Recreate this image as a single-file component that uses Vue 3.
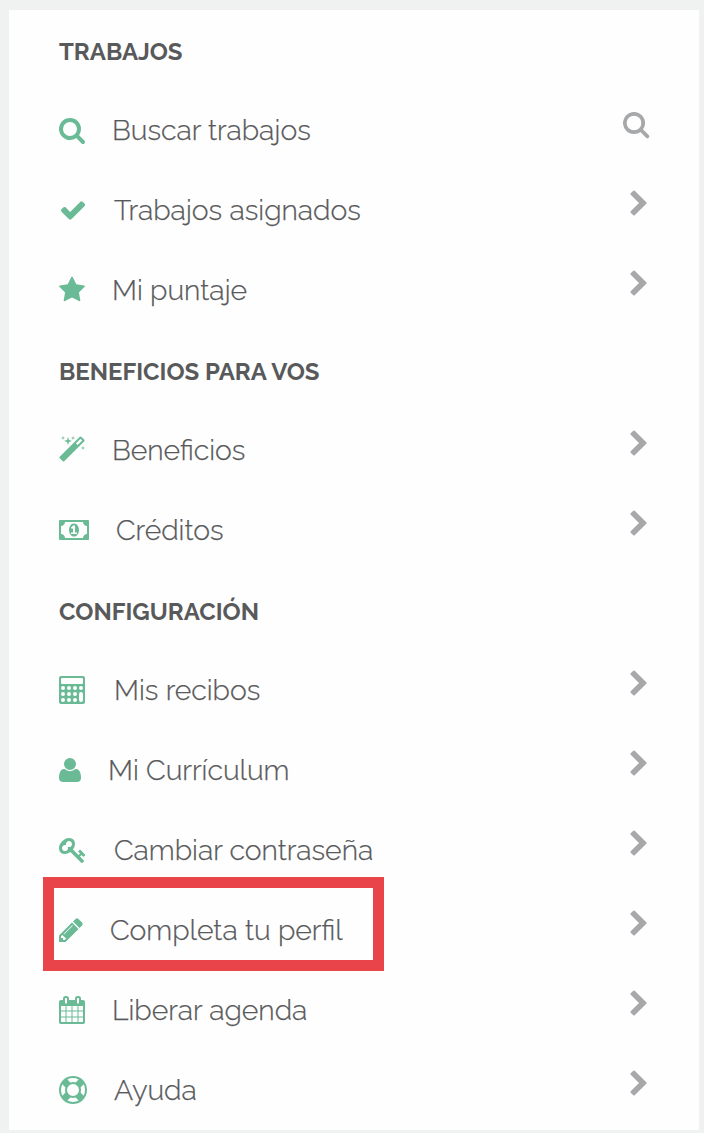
<template>
  <main class="page">
    <div class="panel">
      <section v-for="s in sections" :key="s.title">
        <h2 class="title">{{ s.title }}</h2>
        <ul class="list">
          <li
            v-for="item in s.items"
            :key="item.label"
            class="item"
            :class="{ highlighted: item.highlighted }"
          >
            <svg class="icon" :style="{ width: icons[item.icon].width + 'px' }" :viewBox="icons[item.icon].box">
              <path fill-rule="evenodd" :d="icons[item.icon].path" />
            </svg>
            <a class="label">{{ item.label }}</a>
            <svg v-if="item.icon === 'search'" class="action search" viewBox="0 0 28 28">
              <circle cx="11" cy="11" r="9.2" />
              <path d="M18 18L24.4 24.4" />
            </svg>
            <svg v-else class="action chevron" viewBox="0 0 1792 1792">
              <path :d="chevron" />
            </svg>
          </li>
        </ul>
      </section>
    </div>
  </main>
</template>

<script setup>
const chevron = 'M1363 877l-742 742q-19 19-45 19t-45-19l-166-166q-19-19-19-45t19-45l531-531-531-531q-19-19-19-45t19-45l166-166q19-19 45-19t45 19l742 742q19 19 19 45t-19 45z';

const sections = [
  {
    title: 'TRABAJOS',
    items: [
      { label: 'Buscar trabajos', icon: 'search' },
      { label: 'Trabajos asignados', icon: 'check' },
      { label: 'Mi puntaje', icon: 'star' },
    ],
  },
  {
    title: 'BENEFICIOS PARA VOS',
    items: [
      { label: 'Beneficios', icon: 'magic' },
      { label: 'Créditos', icon: 'money' },
    ],
  },
  {
    title: 'CONFIGURACIÓN',
    items: [
      { label: 'Mis recibos', icon: 'calculator' },
      { label: 'Mi Currículum', icon: 'user' },
      { label: 'Cambiar contraseña', icon: 'key' },
      { label: 'Completa tu perfil', icon: 'pencil', highlighted: true },
      { label: 'Liberar agenda', icon: 'calendar' },
      { label: 'Ayuda', icon: 'ring' },
    ],
  },
];

const icons = {
  search: {
    width: 26,
    box: '64 0 1664 1792',
    path: 'M1216 832q0-185-131.5-316.5t-316.5-131.5-316.5 131.5-131.5 316.5 131.5 316.5 316.5 131.5 316.5-131.5 131.5-316.5zm512 832q0 52-38 90t-90 38q-54 0-90-38l-343-342q-179 124-399 124-143 0-273.5-55.5t-225-150-150-225-55.5-273.5 55.5-273.5 150-225 225-150 273.5-55.5 273.5 55.5 225 150 150 225 55.5 273.5q0 220-124 399l343 343q37 37 37 90z',
  },
  check: {
    width: 28,
    box: '0 0 1792 1792',
    path: 'M1671 566q0 40-28 68l-724 724-136 136q-28 28-68 28t-68-28l-136-136-362-362q-28-28-28-68t28-68l136-136q28-28 68-28t68 28l294 295 656-657q28-28 68-28t68 28l136 136q28 28 28 68z',
  },
  star: {
    width: 26,
    box: '64 0 1664 1792',
    path: 'M1728 647q0 22-26 48l-363 354 86 500q1 7 1 20 0 21-10.5 35.5t-30.5 14.5q-19 0-40-12l-449-236-449 236q-22 12-40 12-21 0-31.5-14.5t-10.5-35.5q0-6 2-20l86-500-364-354q-25-27-25-48 0-37 56-46l502-73 225-455q19-41 49-41t49 41l225 455 502 73q56 9 56 46z',
  },
  magic: {
    width: 26,
    box: '64 0 1664 1792',
    path: 'M1254 581l293-293-107-107-293 293zm447-293q0 27-18 45l-1286 1286q-18 18-45 18t-45-18l-198-198q-18-18-18-45t18-45l1286-1286q18-18 45-18t45 18l198 198q18 18 18 45zm-1351-190l98 30-98 30-30 98-30-98-98-30 98-30 30-98zm350 162l196 60-196 60-60 196-60-196-196-60 196-60 60-196zm930 478l98 30-98 30-30 98-30-98-98-30 98-30 30-98zm-640-640l98 30-98 30-30 98-30-98-98-30 98-30 30-98z',
  },
  money: {
    width: 30,
    box: '0 0 1920 1792',
    path: 'M768 1152h384v-96h-128v-448h-114l-148 137 77 80q42-37 55-57h2v288h-128v96zm512-256q0 70-21 142t-59.5 134-101.5 101-138 39-138-39-101.5-101-59.5-134-21-142 21-142 59.5-134 101.5-101 138-39 138 39 101.5 101 59.5 134 21 142zm512 256v-512q-106 0-181-75t-75-181h-1152q0 106-75 181t-181 75v512q106 0 181 75t75 181h1152q0-106 75-181t181-75zm128-832v1152q0 26-19 45t-45 19h-1792q-26 0-45-19t-19-45v-1152q0-26 19-45t45-19h1792q26 0 45 19t19 45z',
  },
  calculator: {
    width: 28,
    box: '0 0 28 28',
    path: 'M2 0h22a2 2 0 0 1 2 2v24a2 2 0 0 1-2 2h-22a2 2 0 0 1-2-2v-24a2 2 0 0 1 2-2zM3 2a1 1 0 0 0-1 1v4a1 1 0 0 0 1 1h20a1 1 0 0 0 1-1v-4a1 1 0 0 0-1-1zM2 12a2 2 0 1 0 4 0a2 2 0 1 0-4 0zM8 12a2 2 0 1 0 4 0a2 2 0 1 0-4 0zM14 12a2 2 0 1 0 4 0a2 2 0 1 0-4 0zM20 12a2 2 0 1 0 4 0a2 2 0 1 0-4 0zM2 18a2 2 0 1 0 4 0a2 2 0 1 0-4 0zM8 18a2 2 0 1 0 4 0a2 2 0 1 0-4 0zM14 18a2 2 0 1 0 4 0a2 2 0 1 0-4 0zM2 24a2 2 0 1 0 4 0a2 2 0 1 0-4 0zM8 24a2 2 0 1 0 4 0a2 2 0 1 0-4 0zM14 24a2 2 0 1 0 4 0a2 2 0 1 0-4 0zM20 18v6a2 2 0 0 0 4 0v-6a2 2 0 0 0-4 0z',
  },
  user: {
    width: 22,
    box: '192 0 1408 1792',
    path: 'M1600 1405q0 120-73 189.5t-194 69.5h-874q-121 0-194-69.5t-73-189.5q0-53 3.5-103.5t14-109 26.5-108.5 43-97.5 62-81 85.5-53.5 111.5-20q9 0 42 21.5t74.5 48 108 48 133.5 21.5 133.5-21.5 108-48 74.5-48 42-21.5q61 0 111.5 20t85.5 53.5 62 81 43 97.5 26.5 108.5 14 109 3.5 103.5zm-320-893q0 159-112.5 271.5t-271.5 112.5-271.5-112.5-112.5-271.5 112.5-271.5 271.5-112.5 271.5 112.5 112.5 271.5z',
  },
  key: {
    width: 28,
    box: '0 0 1792 1792',
    path: 'M832 512q0-80-56-136t-136-56-136 56-56 136q0 42 19 83-41-19-83-19-80 0-136 56t-56 136 56 136 136 56 136-56 56-136q0-42-19-83 41 19 83 19 80 0 136-56t56-136zm851 704q0 17-49 66t-66 49q-9 0-28.5-16t-36.5-33-38.5-40-24.5-26l-96 96 220 220q28 28 28 68 0 42-39 81t-81 39q-40 0-68-28l-671-671q-176 131-365 131-163 0-265.5-102.5t-102.5-265.5q0-160 95-313t248-248 313-95q163 0 265.5 102.5t102.5 265.5q0 189-131 365l355 355 96-96q-3-3-26-24.5t-40-38.5-33-36.5-16-28.5q0-17 49-66t66-49q13 0 23 10 6 6 46 44.5t82 79.5 86.5 86 73 78 28.5 41z',
  },
  pencil: {
    width: 24,
    box: '128 0 1536 1792',
    path: 'M491 1536l91-91-235-235-91 91v107h128v128h107zm523-928q0-22-22-22-10 0-17 7l-542 542q-7 7-7 17 0 22 22 22 10 0 17-7l542-542q7-7 7-17zm-54-192l416 416-832 832h-416v-416zm683 96q0 53-37 90l-166 166-416-416 166-165q36-38 90-38 53 0 91 38l235 234q37 39 37 91z',
  },
  calendar: {
    width: 26,
    box: '64 0 1664 1792',
    path: 'M192 1664h288v-288h-288v288zm352 0h320v-288h-320v288zm-352-352h288v-320h-288v320zm352 0h320v-320h-320v320zm-352-384h288v-288h-288v288zm736 736h320v-288h-320v288zm-384-736h320v-288h-320v288zm768 736h288v-288h-288v288zm-384-352h320v-320h-320v320zm-352-864v-288q0-13-9.5-22.5t-22.5-9.5h-64q-13 0-22.5 9.5t-9.5 22.5v288q0 13 9.5 22.5t22.5 9.5h64q13 0 22.5-9.5t9.5-22.5zm736 864h288v-320h-288v320zm-384-384h320v-288h-320v288zm384 0h288v-288h-288v288zm32-480v-288q0-13-9.5-22.5t-22.5-9.5h-64q-13 0-22.5 9.5t-9.5 22.5v288q0 13 9.5 22.5t22.5 9.5h64q13 0 22.5-9.5t9.5-22.5zm384-64v1280q0 52-38 90t-90 38h-1408q-52 0-90-38t-38-90v-1280q0-52 38-90t90-38h128v-96q0-66 47-113t113-47h64q66 0 113 47t47 113v96h384v-96q0-66 47-113t113-47h64q66 0 113 47t47 113v96h128q52 0 90 38t38 90z',
  },
  ring: {
    width: 28,
    box: '0 0 1792 1792',
    path: 'M896 0q182 0 348 71t286 191 191 286 71 348-71 348-191 286-286 191-348 71-348-71-286-191-191-286-71-348 71-348 191-286 286-191 348-71zm0 128q-190 0-361 90l194 194q82-28 167-28t167 28l194-194q-171-90-361-90zm-678 1129l194-194q-28-82-28-167t28-167l-194-194q-90 171-90 361t90 361zm678 407q190 0 361-90l-194-194q-82 28-167 28t-167-28l-194 194q171 90 361 90zm0-384q159 0 271.5-112.5t112.5-271.5-112.5-271.5-271.5-112.5-271.5 112.5-112.5 271.5 112.5 271.5 271.5 112.5zm484-217l194 194q90-171 90-361t-90-361l-194 194q28 82 28 167t-28 167z',
  },
};
</script>

<style>
body {
  background: #f0f1f1;
}
</style>

<style scoped>
.page {
  box-sizing: border-box;
  height: 1133px;
  padding: 10px 5px 3px 9px;
  overflow: hidden;
  background: #f0f1f1;
  font-family: Raleway, Lato, sans-serif;
  color: #58595b;
}
.panel {
  box-sizing: border-box;
  height: 1120px;
  padding: 0 46px 0 50px;
  background: #fefefe;
}
.title {
  margin: 0;
  height: 80px;
  font-size: 24px;
  font-weight: 700;
  line-height: 83px;
  white-space: nowrap;
}
.list {
  list-style: none;
  margin: 0;
  padding: 0;
}
.item {
  position: relative;
  display: flex;
  align-items: center;
  height: 80px;
}
.icon {
  flex: none;
  height: 28px;
  fill: #69ba95;
}
.label {
  flex: 1;
  margin-left: 27px;
  font-size: 28.35px;
  font-weight: 300;
  line-height: 80px;
  white-space: nowrap;
  -webkit-text-stroke: 0.25px currentColor;
}
.action {
  flex: none;
  width: 28px;
  height: 28px;
  margin-bottom: 13px;
}
.chevron {
  fill: #a7a8aa;
}
.search {
  margin-right: 2px;
  margin-bottom: 8px;
  fill: none;
  stroke: #a7a8aa;
  stroke-width: 3.7;
  stroke-linecap: round;
}
/* red frame drawn over the row */
.highlighted::before {
  content: '';
  position: absolute;
  box-sizing: border-box;
  top: -13px;
  left: -16px;
  width: 341px;
  height: 94px;
  border: 11px solid #e8444a;
}
</style>
